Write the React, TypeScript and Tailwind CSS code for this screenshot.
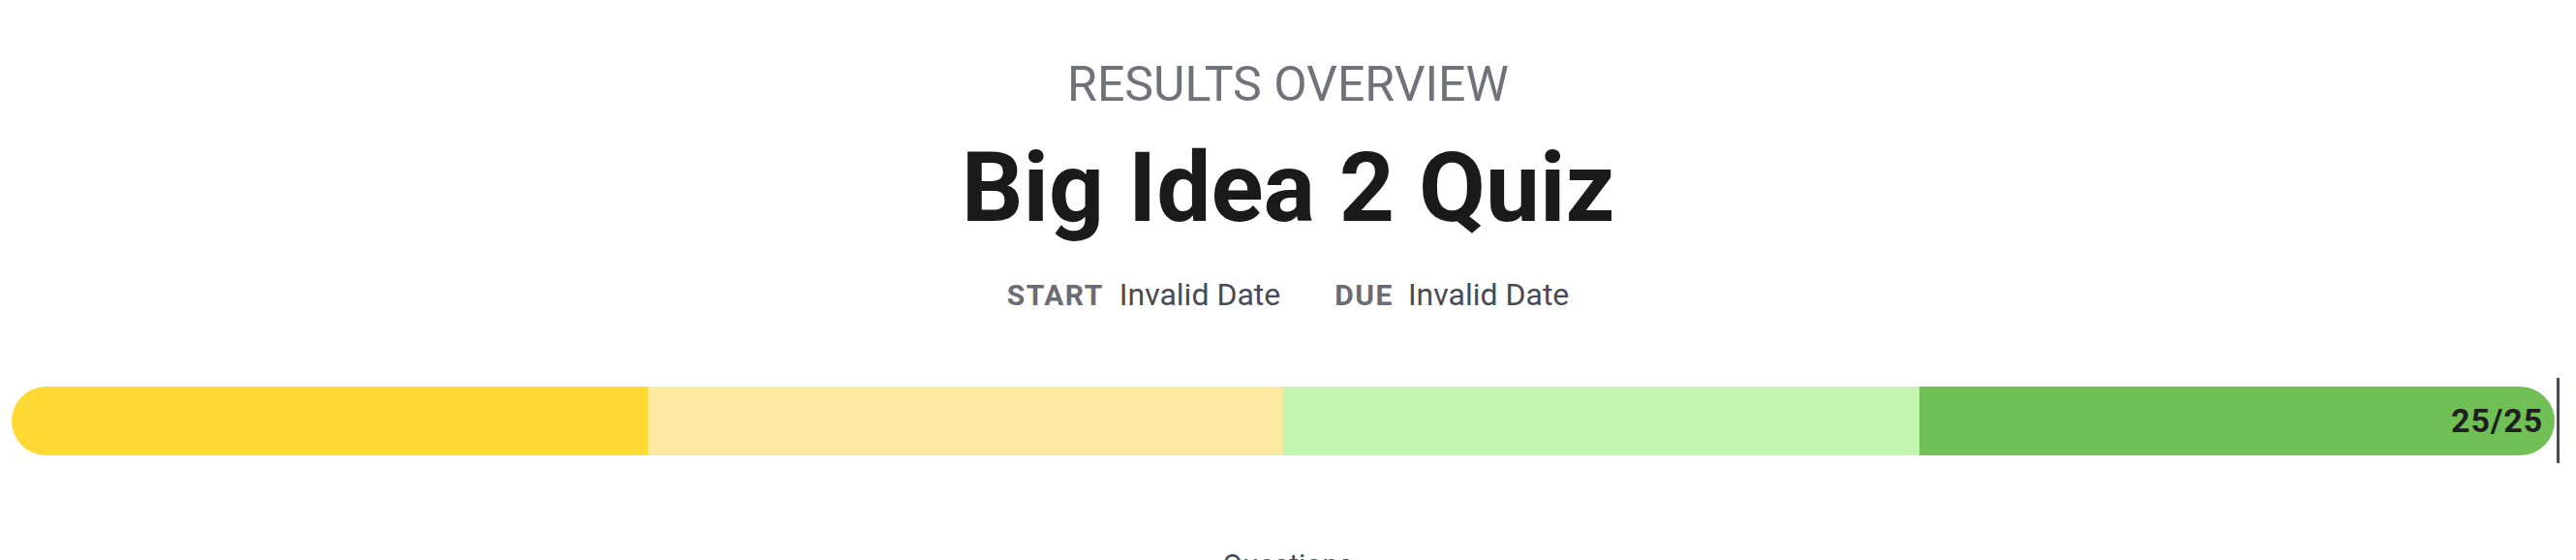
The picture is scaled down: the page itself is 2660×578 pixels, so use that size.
import React from "react";

const segments = [
  "bg-[#FFD833]",
  "bg-[#FEE9A1]",
  "bg-[#C3F4B0]",
  "bg-[#70C055]",
];

export default function App() {
  return (
    <div
      className="w-full min-h-[578px] bg-white flex flex-col items-center overflow-hidden"
      style={{ fontFamily: "Roboto, 'Noto Sans', sans-serif" }}
    >
      <div className="mt-[62px] text-[50px] leading-[50px] text-[#71717a] font-normal">
        RESULTS OVERVIEW
      </div>
      <h1 className="mt-[32px] text-[100px] leading-[100px] font-bold text-[#1a1a1a]">
        Big Idea 2 Quiz
      </h1>
      <div className="mt-[44px] flex items-baseline leading-[32px]">
        <span className="text-[30px] font-bold tracking-wider text-[#6b6b75]">START</span>
        <span className="ml-[16px] text-[32px] text-[#4a4a55]">Invalid Date</span>
        <span className="ml-[56px] text-[30px] font-bold tracking-wider text-[#6b6b75]">DUE</span>
        <span className="ml-[15px] text-[32px] text-[#4a4a55]">Invalid Date</span>
      </div>
      <div className="mt-[69px] w-full pl-[12px] pr-[17px] flex items-center h-[88px]">
        <div className="relative flex-1 h-[71px] rounded-full overflow-hidden flex">
          {segments.map((c, i) => (
            <div key={i} className={`flex-1 h-full ${c}`} />
          ))}
          <div className="absolute inset-y-0 right-[12px] flex items-center text-[34px] font-bold tracking-wide text-[#1f1f1f]">
            25/25
          </div>
        </div>
        <div className="ml-[2px] w-[3px] h-[88px] bg-[#4a4a54]" />
      </div>
      <div className="mt-[90px] text-[30px] leading-[30px] text-[#4a4a55]">Questions</div>
    </div>
  );
}
